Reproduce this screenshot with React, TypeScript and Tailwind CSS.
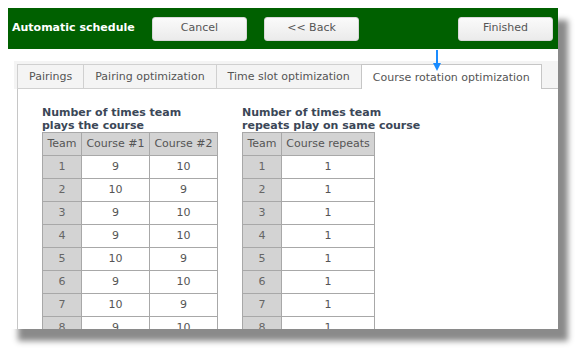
const rows1 = [
  [1, 9, 10],
  [2, 10, 9],
  [3, 9, 10],
  [4, 9, 10],
  [5, 10, 9],
  [6, 9, 10],
  [7, 10, 9],
  [8, 9, 10],
  [9, 10, 9],
];

const tabs = ['Pairings', 'Pairing optimization', 'Time slot optimization', 'Course rotation optimization'];

function HeaderButton({ label, className }: { label: string; className?: string }) {
  return (
    <button
      className={`h-[24px] w-[95px] rounded-[3px] border border-[#d8d8d8] bg-gradient-to-b from-[#fafafa] to-[#ebebeb] text-[11px] text-[#555] ${className ?? ''}`}
    >
      {label}
    </button>
  );
}

export default function App() {
  return (
    <div className="w-[582px] h-[352px] bg-white overflow-hidden font-['DejaVu_Sans',Verdana,sans-serif]">
      <div className="relative ml-2 mt-2 w-[550px] h-[321px] bg-white overflow-hidden shadow-[10px_12px_6px_#8a8a8a] flex flex-col">
        {/* header */}
        <div className="h-[41px] shrink-0 bg-[#006000] flex items-center pl-1 pr-[5px]">
          <span className="text-[11px] font-bold text-white w-[140px]">Automatic schedule</span>
          <HeaderButton label="Cancel" />
          <HeaderButton label="<< Back" className="ml-[17px]" />
          <div className="flex-1" />
          <HeaderButton label="Finished" />
        </div>

        {/* tabs */}
        <div className="mt-[12px] ml-[6px] h-[28px] shrink-0 bg-[#f4f4f4] flex items-end pl-[3px]">
          {tabs.map((t, i) => {
            const active = i === tabs.length - 1;
            return (
              <div
                key={t}
                className={
                  active
                    ? 'h-[25px] px-[11px] pt-[2px] flex items-center border border-b-0 border-[#c6c6c6] bg-white text-[11px] text-[#555]'
                    : 'h-[25px] px-[11px] pt-[2px] flex items-center border-l border-t border-b border-[#d0d0d0] bg-[#f4f4f4] text-[11px] text-[#555]'
                }
              >
                {t}
              </div>
            );
          })}
          <div className="flex-1 h-full border-b border-[#c6c6c6]" />
        </div>

        {/* arrow */}
        <svg className="absolute left-[425px] top-[42px]" width="8" height="21" viewBox="0 0 8 21">
          <line x1="4" y1="0" x2="4" y2="14" stroke="#1a8cff" strokeWidth="2" />
          <polygon points="0,13 8,13 4,21" fill="#1a8cff" />
        </svg>

        {/* panel */}
        <div className="flex-1 ml-[9px] border-l border-[#c6c6c6] bg-white pl-[24px] pt-[17px] flex gap-[24px] text-[11px]">
          <div>
            <div className="font-bold text-[#3b4757] leading-[13px]">
              Number of times team
              <br />
              plays the course
            </div>
            <table className="border-collapse border border-[#9a9a9a] text-center">
              <thead>
                <tr className="h-[23px] bg-[#d3d3d3] text-[#555]">
                  <th className="w-[39px] font-normal border border-[#a8a8a8]">Team</th>
                  <th className="w-[68px] font-normal border border-[#a8a8a8]">Course #1</th>
                  <th className="w-[68px] font-normal border border-[#a8a8a8]">Course #2</th>
                </tr>
              </thead>
              <tbody>
                {rows1.map(([t, a, b]) => (
                  <tr key={t} className="h-[23px]">
                    <td className="bg-[#d3d3d3] text-[#666] border border-[#a8a8a8]">{t}</td>
                    <td className="text-[#555] border border-[#a8a8a8]">{a}</td>
                    <td className="text-[#555] border border-[#a8a8a8]">{b}</td>
                  </tr>
                ))}
              </tbody>
            </table>
          </div>
          <div>
            <div className="font-bold text-[#3b4757] leading-[13px] whitespace-nowrap">
              Number of times team
              <br />
              repeats play on same course
            </div>
            <table className="border-collapse border border-[#9a9a9a] text-center">
              <thead>
                <tr className="h-[23px] bg-[#d3d3d3] text-[#555]">
                  <th className="w-[39px] font-normal border border-[#a8a8a8]">Team</th>
                  <th className="w-[93px] font-normal border border-[#a8a8a8]">Course repeats</th>
                </tr>
              </thead>
              <tbody>
                {rows1.map(([t]) => (
                  <tr key={t} className="h-[23px]">
                    <td className="bg-[#d3d3d3] text-[#666] border border-[#a8a8a8]">{t}</td>
                    <td className="text-[#555] border border-[#a8a8a8]">1</td>
                  </tr>
                ))}
              </tbody>
            </table>
          </div>
        </div>
      </div>
    </div>
  );
}
